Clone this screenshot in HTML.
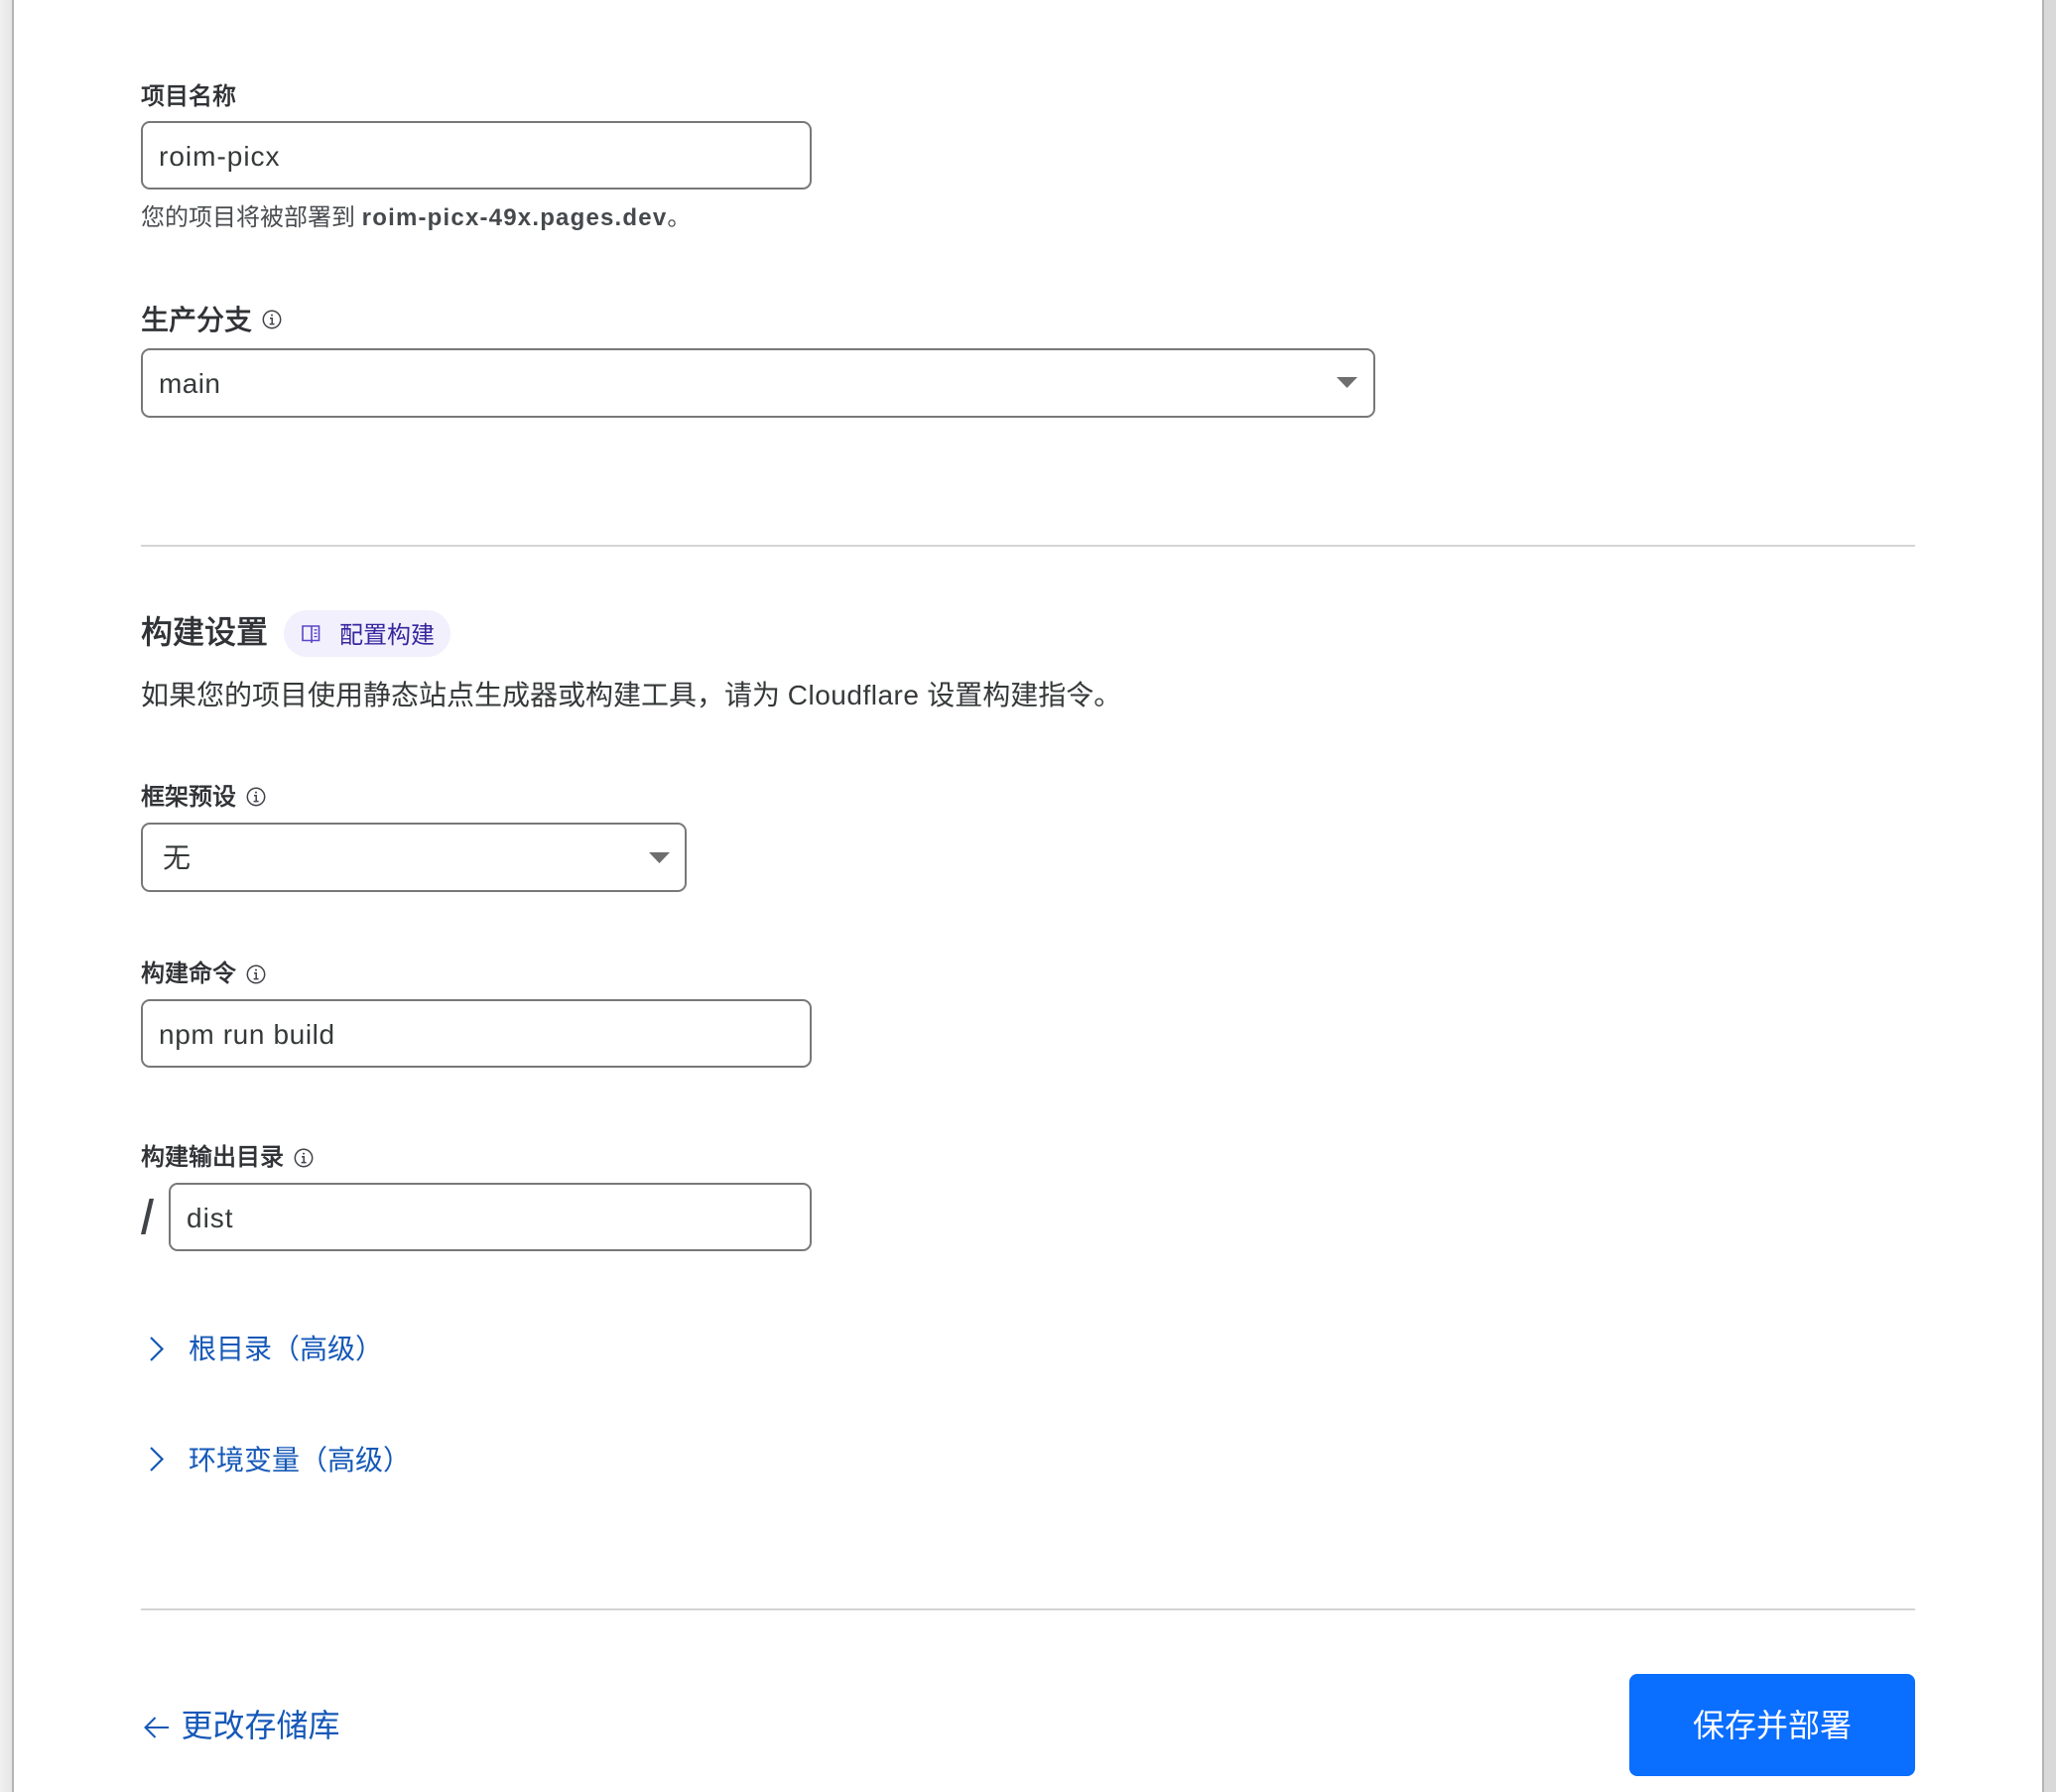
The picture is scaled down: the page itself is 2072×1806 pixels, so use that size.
<!DOCTYPE html>
<html lang="zh-CN">
<head>
<meta charset="utf-8">
<title>项目设置</title>
<style>
html,body{margin:0;padding:0;background:#fff;}
body{width:2072px;height:1806px;position:relative;overflow:hidden;font-family:"Liberation Sans","Noto Sans CJK SC",sans-serif;color:#36393a;}
.a{position:absolute;white-space:nowrap;}
.lb{font-size:24px;font-weight:400;-webkit-text-stroke:.7px #313336;line-height:32px;height:32px;color:#313336;left:142px;}
.box{position:absolute;box-sizing:border-box;border:2px solid #787878;border-radius:9px;background:#fff;}
.v{position:absolute;font-size:28px;line-height:40px;white-space:nowrap;color:#36393a;}
.hr{position:absolute;left:142px;width:1788px;height:2px;background:#d4d4d4;}
.link{color:#1558b8;font-size:28px;line-height:40px;}
svg{position:absolute;display:block;overflow:visible;}
</style>
</head>
<body>
<div class="a" style="left:0;top:0;width:12px;height:1806px;background:linear-gradient(90deg,#f0f0f0,#e6e6e6)"></div>
<div class="a" style="left:12px;top:0;width:2px;height:1806px;background:#b4b4b4"></div>
<div class="a" style="left:2058px;top:0;width:2px;height:1806px;background:#b4b4b4"></div>
<div class="a" style="left:2060px;top:0;width:12px;height:1806px;background:#d9d9d9"></div>

<div class="a lb" style="top:82px">项目名称</div>
<div class="box" style="left:142px;top:122px;width:676px;height:69px"></div>
<div class="v" style="left:160px;top:138px;letter-spacing:1px">roim-picx</div>
<div class="a" style="left:142px;top:204px;font-size:24px;line-height:32px;color:#4a4d50">您的项目将被部署到 <b style="font-size:24px;color:#46494c;letter-spacing:1.2px">roim-picx-49x.pages.dev</b>。</div>

<div class="a" style="left:142px;top:303px;font-size:28px;font-weight:400;-webkit-text-stroke:.75px #313336;line-height:40px;color:#313336">生产分支</div>
<svg style="left:263.5px;top:312px" width="20" height="20" viewBox="0 0 20 20" fill="none" stroke="#404347" stroke-width="1.5"><circle cx="10" cy="10" r="8.7"/><path d="M8 8.800h2.200v5.600M7.600 14.600h5"/><circle cx="10" cy="5.600" r="1" fill="#404347" stroke="none"/></svg>
<div class="box" style="left:142px;top:351px;width:1244px;height:70px"></div>
<div class="v" style="left:160px;top:367px;letter-spacing:.4px">main</div>
<svg style="left:1347px;top:380px" width="21" height="11" viewBox="0 0 21 11"><path d="M0 0h21L10.500 11z" fill="#6e6e6e"/></svg>

<div class="hr" style="top:549px"></div>

<div class="a" style="left:142px;top:615px;font-size:32px;font-weight:400;-webkit-text-stroke:.8px #313336;line-height:44px;color:#313336">构建设置</div>
<div class="a" style="left:286px;top:615px;width:168px;height:47px;border-radius:24px;background:#f2f0fd"></div>
<svg style="left:304px;top:630px" width="19" height="18" viewBox="0 0 19 18" fill="none" stroke="#5a46c8" stroke-width="1.6"><path d="M10 1H1v14.500h9V1zM10 1h7.500v14.500H10M10 15.500V18"/><path d="M12.500 4.800h3M12.500 8.200h3M12.500 11.600h3" stroke-width="1.400"/></svg>
<div class="a" style="left:342px;top:625px;font-size:24px;line-height:32px;color:#36269e">配置构建</div>
<div class="a" style="left:142px;top:681px;font-size:28px;line-height:40px;color:#36393a">如果您的项目使用静态站点生成器或构建工具，请为 <span style="letter-spacing:.5px">Cloudflare</span> 设置构建指令。</div>

<div class="a lb" style="top:788px">框架预设</div>
<svg style="left:248px;top:793px" width="20" height="20" viewBox="0 0 20 20" fill="none" stroke="#404347" stroke-width="1.5"><circle cx="10" cy="10" r="8.700"/><path d="M8 8.800h2.200v5.600M7.600 14.600h5"/><circle cx="10" cy="5.600" r="1" fill="#404347" stroke="none"/></svg>
<div class="box" style="left:142px;top:829px;width:550px;height:70px"></div>
<div class="v" style="left:164px;top:845px">无</div>
<svg style="left:654px;top:859px" width="21" height="11" viewBox="0 0 21 11"><path d="M0 0h21L10.500 11z" fill="#6e6e6e"/></svg>

<div class="a lb" style="top:966px">构建命令</div>
<svg style="left:248px;top:972px" width="20" height="20" viewBox="0 0 20 20" fill="none" stroke="#404347" stroke-width="1.5"><circle cx="10" cy="10" r="8.700"/><path d="M8 8.800h2.200v5.600M7.600 14.600h5"/><circle cx="10" cy="5.600" r="1" fill="#404347" stroke="none"/></svg>
<div class="box" style="left:142px;top:1007px;width:676px;height:69px"></div>
<div class="v" style="left:160px;top:1023px;letter-spacing:.62px">npm run build</div>

<div class="a lb" style="top:1151px">构建输出目录</div>
<svg style="left:296px;top:1157px" width="20" height="20" viewBox="0 0 20 20" fill="none" stroke="#404347" stroke-width="1.5"><circle cx="10" cy="10" r="8.700"/><path d="M8 8.800h2.200v5.600M7.600 14.600h5"/><circle cx="10" cy="5.600" r="1" fill="#404347" stroke="none"/></svg>
<svg style="left:142px;top:1208px" width="13" height="36" viewBox="0 0 13 36"><path d="M8.500 0h4.500L4.500 36H0z" fill="#404347"/></svg>
<div class="box" style="left:170px;top:1192px;width:648px;height:69px"></div>
<div class="v" style="left:188px;top:1208px;letter-spacing:1px">dist</div>

<svg style="left:150.500px;top:1347px" width="14" height="25" viewBox="0 0 14 25" fill="none" stroke="#1558b8" stroke-width="2.200"><path d="M1 1l11.500 11.500L1 24"/></svg>
<div class="a link" style="left:190px;top:1340px">根目录（高级）</div>
<svg style="left:150.500px;top:1458px" width="14" height="25" viewBox="0 0 14 25" fill="none" stroke="#1558b8" stroke-width="2.200"><path d="M1 1l11.500 11.500L1 24"/></svg>
<div class="a link" style="left:190px;top:1452px">环境变量（高级）</div>

<div class="hr" style="top:1621px"></div>

<svg style="left:145px;top:1730px" width="25" height="22" viewBox="0 0 25 22" fill="none" stroke="#1558b8" stroke-width="2"><path d="M25 11H1.500M11.500 1L1.500 11l10 10"/></svg>
<div class="a" style="left:182.500px;top:1717px;font-size:32px;line-height:44px;color:#1558b8">更改存储库</div>

<div class="a" style="left:1642px;top:1687px;width:288px;height:103px;border-radius:8px;background:#0a6eff"></div>
<div class="a" style="left:1706px;top:1717px;font-size:32px;line-height:44px;color:#fff">保存并部署</div>
</body>
</html>
